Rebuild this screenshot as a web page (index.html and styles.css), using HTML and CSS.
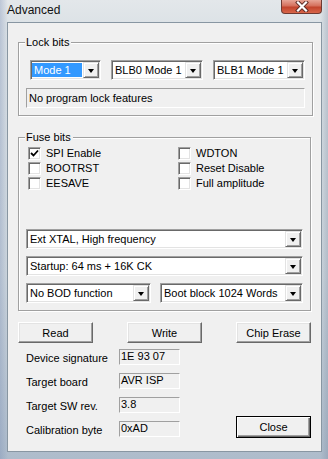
FILE: index.html
```html
<!DOCTYPE html>
<html lang="en">
<head>
    <meta charset="UTF-8">
    <meta name="viewport" content="width=device-width, initial-scale=1.0">
    <title>Advanced</title>
    <link rel="stylesheet" href="styles.css">
</head>
<body>
    <div class="window">
        <div class="titlebar">
            <span class="title">Advanced</span>
            <span class="close-x">
                <svg width="14" height="11" viewBox="0 0 14 11">
                    <path d="M3 1.5 L11 9.5 M11 1.5 L3 9.5" stroke="#5a2a24" stroke-width="4" stroke-linecap="square"/>
                    <path d="M3 1.5 L11 9.5 M11 1.5 L3 9.5" stroke="#fff" stroke-width="2.2" stroke-linecap="square"/>
                </svg>
            </span>
        </div>

        <div class="client">
            <fieldset class="group lock-group">
                <legend>Lock bits</legend>
                <div class="combo-row">
                    <div class="combo w-mode"><span class="value selected">Mode 1</span><span class="drop"><i class="arrow"></i></span></div>
                    <div class="combo w-blb"><span class="value">BLB0 Mode 1</span><span class="drop"><i class="arrow"></i></span></div>
                    <div class="combo w-blb"><span class="value">BLB1 Mode 1</span><span class="drop"><i class="arrow"></i></span></div>
                </div>
                <div class="static">No program lock features</div>
            </fieldset>

            <fieldset class="group fuse-group">
                <legend>Fuse bits</legend>
                <div class="checks">
                    <div class="check"><span class="box"><svg width="9" height="9" viewBox="0 0 9 9"><path d="M1 4 L3.5 6.5 L8 1.5" fill="none" stroke="#000" stroke-width="1.8"/></svg></span>SPI Enable</div>
                    <div class="check"><span class="box"></span>WDTON</div>
                    <div class="check"><span class="box"></span>BOOTRST</div>
                    <div class="check"><span class="box"></span>Reset Disable</div>
                    <div class="check"><span class="box"></span>EESAVE</div>
                    <div class="check"><span class="box"></span>Full amplitude</div>
                </div>
                <div class="combo full"><span class="value">Ext XTAL, High frequency</span><span class="drop"><i class="arrow"></i></span></div>
                <div class="combo full"><span class="value">Startup: 64 ms + 16K CK</span><span class="drop"><i class="arrow"></i></span></div>
                <div class="combo-pair">
                    <div class="combo w-bod"><span class="value">No BOD function</span><span class="drop"><i class="arrow"></i></span></div>
                    <div class="combo w-boot"><span class="value">Boot block 1024 Words</span><span class="drop"><i class="arrow"></i></span></div>
                </div>
            </fieldset>

            <div class="buttons">
                <button class="btn">Read</button>
                <button class="btn">Write</button>
                <button class="btn">Chip Erase</button>
            </div>

            <div class="info">
                <div class="info-rows">
                    <div class="info-row"><span class="info-label">Device signature</span><span class="info-value">1E 93 07</span></div>
                    <div class="info-row"><span class="info-label">Target board</span><span class="info-value">AVR ISP</span></div>
                    <div class="info-row"><span class="info-label">Target SW rev.</span><span class="info-value">3.8</span></div>
                    <div class="info-row"><span class="info-label">Calibration byte</span><span class="info-value">0xAD</span></div>
                </div>
                <button class="btn default">Close</button>
            </div>
        </div>
    </div>
</body>
</html>
```

FILE: styles.css
```css
body {
    margin: 0;
    font-family: "Liberation Sans", Arial, sans-serif;
    font-size: 11px;
    color: #000;
}
.window {
    width: 328px;
    height: 459px;
    box-sizing: border-box;
    padding: 0 6px 0 7px;
    background:
        linear-gradient(to right, rgba(120, 140, 180, 0.35) 0, rgba(120, 140, 180, 0) 8px, rgba(120, 140, 180, 0) 320px, rgba(110, 125, 150, 0.3) 328px),
        linear-gradient(to bottom, #e3e7ea 0, #dce2e6 25px, #cdd6dd 60%, #aebccb 100%);
}
.titlebar {
    height: 22px;
    display: flex;
    justify-content: space-between;
    align-items: flex-start;
}
.title {
    font-size: 12px;
    line-height: 16px;
    padding-top: 2px;
    color: #111;
}
.close-x {
    width: 41px;
    height: 14px;
    box-sizing: border-box;
    border: 1px solid #6e3a32;
    border-top: none;
    border-radius: 0 0 4px 4px;
    background: linear-gradient(to bottom, #e7a596 0, #d5705c 45%, #c2442c 55%, #d8664a 100%);
    display: flex;
    justify-content: center;
    align-items: center;
}
.client {
    height: 430px;
    box-sizing: border-box;
    background: #f0f0f0;
    border: 1px solid #8896a2;
    padding: 0 10px;
}
.group {
    margin: 0;
    padding: 0 7px 7px;
    border: 1px solid #a0a0a0;
    box-shadow: inset 1px 1px 0 #fff, 1px 1px 0 #fff;
}
.group legend {
    padding: 0 2px 0 1px;
    margin-left: -1px;
    line-height: 13px;
    background: #f0f0f0;
}
.lock-group {
    margin-top: 13px;
}
.fuse-group {
    margin-top: 15px;
}
.combo-row {
    display: flex;
    gap: 10px;
    padding: 11px 0 0 4px;
}
.combo {
    height: 20px;
    box-sizing: border-box;
    display: flex;
    background: #fff;
    border: 1px solid;
    border-color: #a0a0a0 #fff #fff #a0a0a0;
    box-shadow: inset 1px 1px 0 #696969, inset -1px -1px 0 #e3e3e3;
    padding: 1px;
}
.combo .value {
    flex: 1;
    margin: 1px 1px 1px 0;
    padding-left: 2px;
    line-height: 14px;
    white-space: nowrap;
    overflow: hidden;
}
.combo .value.selected {
    background: #3399ff;
    color: #fff;
}
.drop {
    width: 16px;
    box-sizing: border-box;
    background: #f0f0f0;
    border: 1px solid;
    border-color: #e3e3e3 #696969 #696969 #e3e3e3;
    box-shadow: inset 1px 1px 0 #fff, inset -1px -1px 0 #a0a0a0;
    display: flex;
    justify-content: center;
    align-items: center;
}
.arrow {
    width: 0;
    height: 0;
    border-left: 3.5px solid transparent;
    border-right: 3.5px solid transparent;
    border-top: 4px solid #000;
    margin-top: 1px;
}
.w-mode {
    width: 71px;
}
.w-blb {
    width: 92px;
}
.static {
    margin-top: 8px;
    height: 20px;
    box-sizing: border-box;
    border: 1px solid;
    border-color: #a0a0a0 #fff #fff #a0a0a0;
    padding: 2px 2px 0;
    line-height: 14px;
}
.checks {
    display: grid;
    grid-template-columns: 150px 1fr;
    grid-auto-rows: 15px;
    padding: 3px 0 0 2px;
}
.check {
    display: flex;
    align-items: flex-start;
    gap: 5px;
    line-height: 13px;
}
.box {
    width: 13px;
    height: 13px;
    box-sizing: border-box;
    background: #fff;
    border: 1px solid;
    border-color: #a0a0a0 #fff #fff #a0a0a0;
    box-shadow: inset 1px 1px 0 #696969, inset -1px -1px 0 #e3e3e3;
    display: flex;
    justify-content: center;
    align-items: center;
}
.combo.full {
    margin-top: 7px;
}
.checks + .combo.full {
    margin-top: 37px;
}
.combo-pair {
    display: flex;
    justify-content: space-between;
    margin-top: 7px;
}
.w-bod {
    width: 125px;
}
.w-boot {
    width: 143px;
}
.buttons {
    display: flex;
    justify-content: space-between;
    margin-top: 11px;
}
.btn {
    width: 75px;
    height: 21px;
    box-sizing: border-box;
    font-family: inherit;
    font-size: 11px;
    color: #000;
    background: #f0f0f0;
    border: 1px solid;
    border-color: #fff #696969 #696969 #fff;
    box-shadow: inset -1px -1px 0 #a0a0a0, inset 1px 1px 0 #e3e3e3;
    padding: 0;
}
.btn.default {
    height: 22px;
    border: 1px solid #000;
    box-shadow: inset 1px 1px 0 #fff, inset -1px -1px 0 #696969, inset -2px -2px 0 #a0a0a0;
    margin-bottom: 0;
}
.info {
    display: flex;
    justify-content: space-between;
    align-items: flex-end;
    margin-top: 6px;
}
.info-rows {
    padding-left: 8px;
}
.info-row {
    display: flex;
    align-items: center;
    height: 16px;
    margin-bottom: 8px;
}
.info-row:last-child {
    margin-bottom: 1px;
}
.info-label {
    width: 93px;
    padding-top: 2px;
}
.info-value {
    width: 61px;
    height: 16px;
    box-sizing: border-box;
    border: 1px solid;
    border-color: #a0a0a0 #fff #fff #a0a0a0;
    line-height: 13px;
    padding-left: 1px;
}
```
